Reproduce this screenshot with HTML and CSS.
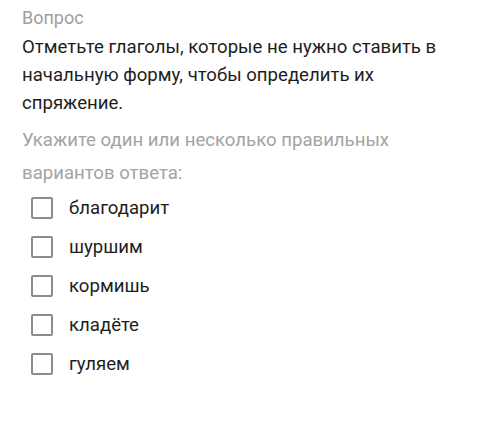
FILE: index.html
```html
<!DOCTYPE html>
<html>
    <head>
        <meta charset="utf-8">
        <title>Вопрос</title>
        <link rel="stylesheet" href="styles.css">
    </head>
    <body>
        <div class="question">
            <div class="question-label">Вопрос</div>
            <p class="question-text">Отметьте глаголы, которые не нужно ставить в начальную форму, чтобы определить их спряжение.</p>
            <p class="question-hint">Укажите один или несколько правильных вариантов ответа:</p>
            <ul class="options">
                <li class="option"><span class="box"></span>благодарит</li>
                <li class="option"><span class="box"></span>шуршим</li>
                <li class="option"><span class="box"></span>кормишь</li>
                <li class="option"><span class="box"></span>кладёте</li>
                <li class="option"><span class="box"></span>гуляем</li>
            </ul>
        </div>
    </body>
</html>
```

FILE: styles.css
```css
body {
    margin: 0;
    background: #fff;
    font-family: Roboto, "Noto Sans", sans-serif;
    color: #1e1e1e;
}

.question {
    padding: 7px 36px 0 22px;
}

.question-label {
    font-size: 18px;
    line-height: 22px;
    color: #9e9e9e;
}

.question-text {
    margin: 4px 0 0 0;
    font-size: 18.6px;
    line-height: 28px;
}

.question-hint {
    margin: 7px 0 0 0;
    font-size: 18.6px;
    line-height: 33px;
    color: #a3a3a3;
}

.options {
    list-style: none;
    margin: -2px 0 0 0;
    padding: 0 0 0 9px;
}

.option {
    display: flex;
    align-items: center;
    gap: 16px;
    height: 39px;
    font-size: 18.6px;
}

.box {
    width: 18px;
    height: 18px;
    border: 2.5px solid #8c8c8c;
    border-radius: 2px;
}
```
